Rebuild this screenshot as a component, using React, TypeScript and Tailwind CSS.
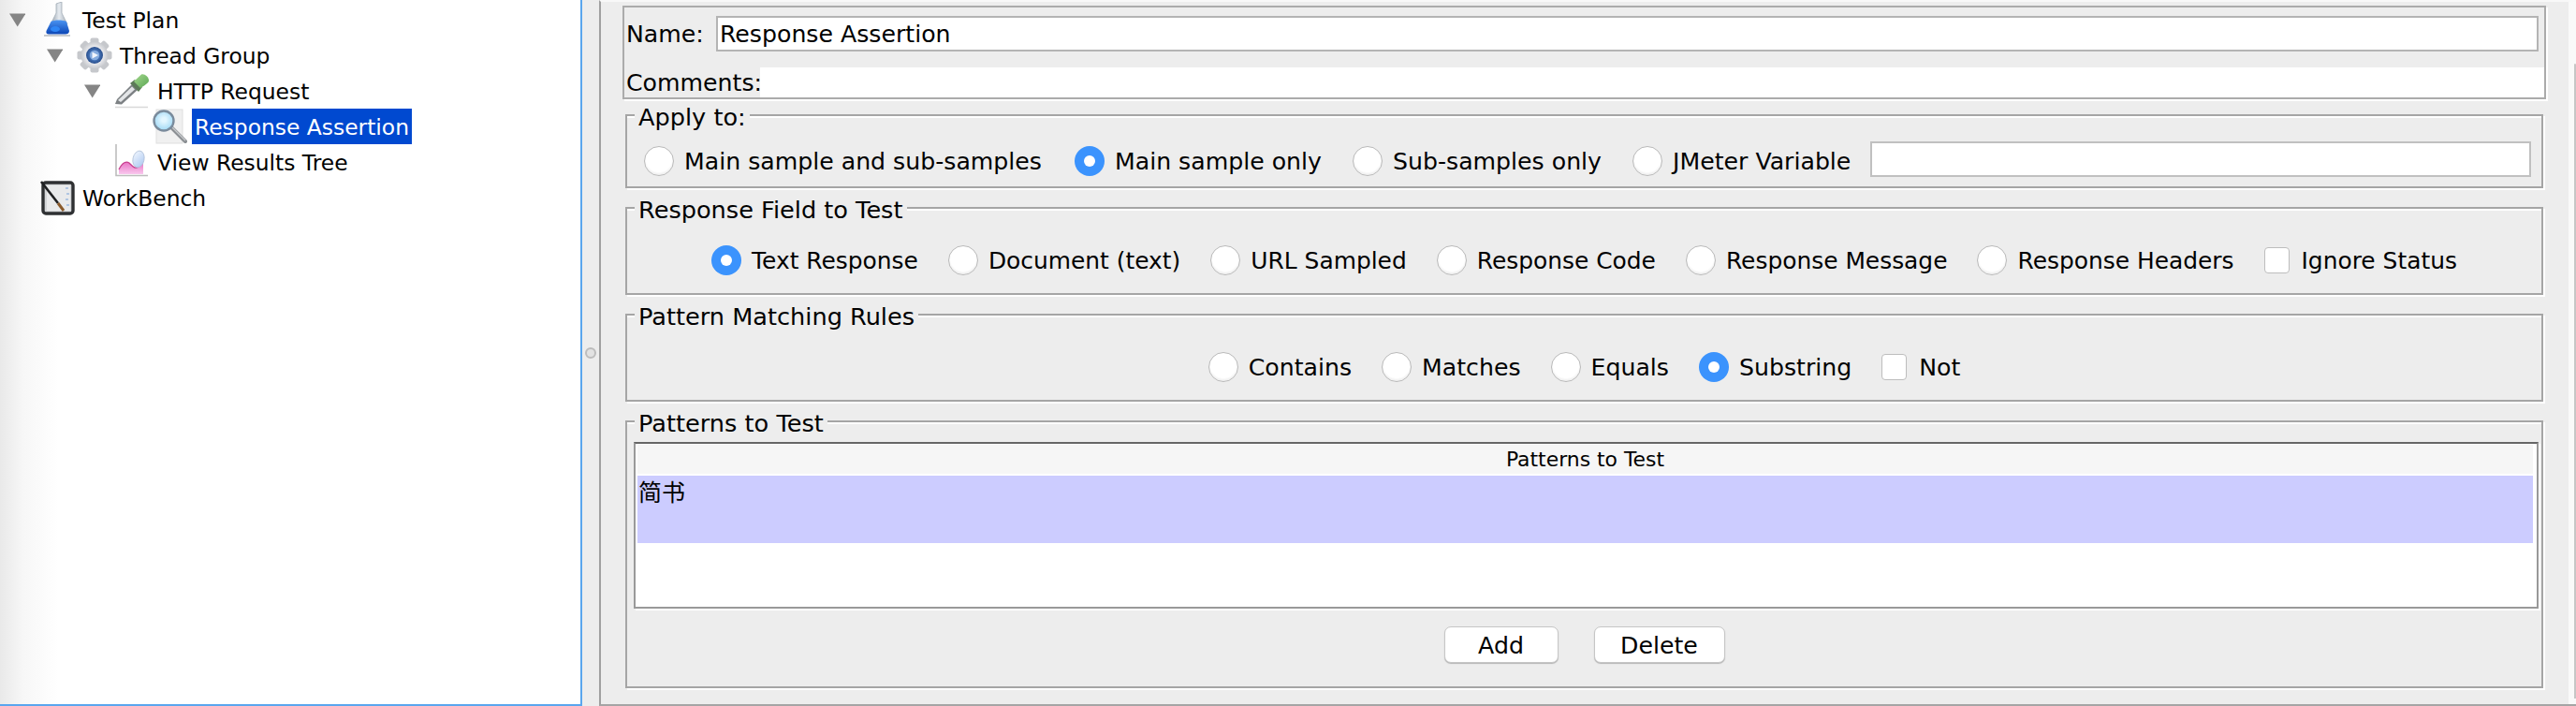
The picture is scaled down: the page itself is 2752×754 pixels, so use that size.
import React from "react";

function Triangle() {
  return (
    <svg width="17" height="15" viewBox="0 0 17 15" className="shrink-0">
      <path d="M0 0.5H17.5L8.7 14.5Z" fill="#858585" />
    </svg>
  );
}

function FlaskIcon() {
  return (
    <svg width="38" height="38" viewBox="0 0 38 38" className="blur-[0.4px]">
      <defs>
        <linearGradient id="liq" x1="0" y1="0" x2="0" y2="1">
          <stop offset="0" stopColor="#4a94f2" />
          <stop offset="1" stopColor="#0b45b5" />
        </linearGradient>
        <linearGradient id="glass" x1="0" y1="0" x2="1" y2="0">
          <stop offset="0" stopColor="#8f9ba8" />
          <stop offset="0.5" stopColor="#e6ebf0" />
          <stop offset="1" stopColor="#a3adb8" />
        </linearGradient>
      </defs>
      <path d="M18 2L24 0L24 12L30 24L12 24L18 12Z" fill="url(#glass)" stroke="#a4aeb8" strokeWidth="0.8" />
      <path d="M12.5 21C16 19 25 19 29 21L32 31C32 33.5 30 34.5 28 34.5H10C8 34.5 7 33.5 7.5 31Z" fill="url(#liq)" />
      <ellipse cx="17" cy="29" rx="5" ry="3" fill="#2e86f5" />
      <path d="M5 36H33" stroke="#8d959c" strokeWidth="1.6" opacity="0.6" />
    </svg>
  );
}

function GearIcon() {
  const teeth = Array.from({ length: 8 }, (_, i) => (i * 360) / 8);
  return (
    <svg width="38" height="38" viewBox="0 0 38 38" className="blur-[0.4px]">
      <defs>
        <radialGradient id="gearG" cx="0.5" cy="0.5" r="0.6">
          <stop offset="0.5" stopColor="#ececef" />
          <stop offset="1" stopColor="#b4b7bc" />
        </radialGradient>
        <radialGradient id="hub" cx="0.5" cy="0.5" r="0.5">
          <stop offset="0.2" stopColor="#5a90da" />
          <stop offset="1" stopColor="#2a4f8c" />
        </radialGradient>
      </defs>
      {teeth.map((a) => (
        <rect key={a} x="14.5" y="0.5" width="9" height="9" rx="2" fill="#c6c8cc" transform={`rotate(${a} 19 19)`} />
      ))}
      <circle cx="19" cy="19" r="14.5" fill="url(#gearG)" />
      <circle cx="19" cy="19" r="9" fill="url(#hub)" />
      <circle cx="19" cy="19" r="5.2" fill="#86acdf" />
      <path d="M16.5 15.5L23 19L16.5 22.5Z" fill="#f2f6fc" />
    </svg>
  );
}

function DropperIcon() {
  return (
    <svg width="38" height="38" viewBox="0 0 38 38" className="blur-[0.4px]">
      <defs>
        <linearGradient id="bulb" x1="0" y1="0" x2="1" y2="1">
          <stop offset="0" stopColor="#a6d98f" />
          <stop offset="1" stopColor="#5aa653" />
        </linearGradient>
      </defs>
      <path d="M1 36.5H36" stroke="#c9c9c9" strokeWidth="1.5" opacity="0.7" />
      <path d="M1 33L3 28L19 12L25 18L8 33.5Z" fill="#7d8184" />
      <path d="M4 29L19 14.5L22 17.5L7 31Z" fill="#e3e5e7" />
      <path d="M17 11L22 7L30 15L26 20Z" fill="#5c7a58" />
      <path d="M21 9L29 1.5C31.5 0 37 3.5 37 8C37 10 35 11.5 28 16Z" fill="url(#bulb)" />
    </svg>
  );
}

function MagnifierIcon() {
  return (
    <svg width="38" height="38" viewBox="0 0 38 38" className="blur-[0.4px]">
      <defs>
        <radialGradient id="lens" cx="0.5" cy="0.45" r="0.55">
          <stop offset="0.2" stopColor="#e3f6ff" />
          <stop offset="1" stopColor="#9fd8f5" />
        </radialGradient>
      </defs>
      <rect x="5" y="1" width="28" height="36" fill="#f0f0f0" stroke="#dfdfdf" />
      <path d="M21 20L36 35" stroke="#8b8f93" strokeWidth="4" strokeLinecap="round" />
      <path d="M22 20L36 34" stroke="#c8cbce" strokeWidth="1.2" />
      <circle cx="13" cy="13" r="10.5" fill="url(#lens)" stroke="#7a8b9c" strokeWidth="2.4" />
    </svg>
  );
}

function ChartIcon() {
  return (
    <svg width="38" height="38" viewBox="0 0 38 38" className="blur-[0.4px]">
      <defs>
        <linearGradient id="pink" x1="0" y1="0" x2="0" y2="1">
          <stop offset="0" stopColor="#e873c4" />
          <stop offset="1" stopColor="#f9c8ee" />
        </linearGradient>
        <linearGradient id="bl" x1="0" y1="0" x2="1" y2="1">
          <stop offset="0" stopColor="#f5f9ff" />
          <stop offset="1" stopColor="#a9c6f0" />
        </linearGradient>
      </defs>
      <path d="M2 0V33.5H36" fill="none" stroke="#bdbdbd" strokeWidth="1.6" />
      <path d="M5 32V27C9 19 13 18 16 20C19 23 22 27 26 24L31 20V32Z" fill="url(#pink)" />
      <path d="M5 27C9 19 13 18 16 20C19 23 22 27 26 24" fill="none" stroke="#c9408f" strokeWidth="1.3" />
      <ellipse cx="26" cy="16" rx="6" ry="9" fill="url(#bl)" stroke="#aebfd8" strokeWidth="0.8" transform="rotate(12 26 16)" />
    </svg>
  );
}

function NotebookIcon() {
  return (
    <svg width="38" height="38" viewBox="0 0 38 38" className="blur-[0.4px]">
      <rect x="4" y="3" width="32" height="33" rx="3" fill="#d4d6d8" stroke="#2e3032" strokeWidth="3.4" />
      <rect x="8" y="6" width="25" height="27" fill="#e9eaeb" />
      <path d="M28 9h3M29 15h3M28 21h3M29 27h3" stroke="#9dbbe0" strokeWidth="1.6" />
      <path d="M2 2L20 25" stroke="#1f2022" strokeWidth="2.6" />
      <path d="M20 25L26 33" stroke="#8a5a2b" strokeWidth="3" />
    </svg>
  );
}

function TreeRow({
  level,
  expander,
  icon,
  label,
  selected,
}: {
  level: number;
  expander?: boolean;
  icon: React.ReactNode;
  label: string;
  selected?: boolean;
}) {
  const pad = ["pl-[10px]", "pl-[50px]", "pl-[90px]", "pl-[130px]"][level];
  return (
    <div className={`flex h-[38px] items-center ${pad}`}>
      <div className="mr-[15px] flex w-[17px] shrink-0 justify-center">{expander ? <Triangle /> : null}</div>
      <div className="h-[38px] w-[38px] shrink-0">{icon}</div>
      <span
        className={`ml-[5px] h-[38px] px-[3px] text-[23.4px] leading-[40px] ${selected ? "bg-[#0049d0] text-white" : "text-black"}`}
      >
        {label}
      </span>
    </div>
  );
}

function Radio({ checked }: { checked?: boolean }) {
  if (checked) {
    return (
      <span className="flex h-[32px] w-[32px] shrink-0 items-center justify-center rounded-full bg-[#3b93fd]">
        <span className="h-[12px] w-[12px] rounded-full bg-white" />
      </span>
    );
  }
  return (
    <span className="h-[32px] w-[32px] shrink-0 rounded-full border border-[#b9b9b9] bg-white shadow-[inset_0_-2px_2px_#f0f0f0]" />
  );
}

function RadioItem({ label, checked, className }: { label: string; checked?: boolean; className?: string }) {
  return (
    <div className={`flex items-center gap-[11px] ${className ?? ""}`}>
      <Radio checked={checked} />
      <span className="whitespace-nowrap pt-[2px]">{label}</span>
    </div>
  );
}

function CheckItem({ label }: { label: string }) {
  return (
    <div className="flex items-center gap-[13px]">
      <span className="h-[28px] w-[27px] shrink-0 rounded-[4px] border border-[#bdbdbd] bg-white" />
      <span className="whitespace-nowrap pt-[2px]">{label}</span>
    </div>
  );
}

function Group({ title, className, children }: { title: string; className: string; children: React.ReactNode }) {
  return (
    <div
      className={`relative border-2 border-[#a5a5a5] shadow-[2px_2px_0_#ffffff,inset_0_2px_0_#ffffff] ${className}`}
    >
      <span className="absolute left-[8px] top-[-13px] bg-[#ededed] px-[4px] text-[25.6px] leading-[29px]">{title}</span>
      {children}
    </div>
  );
}

export default function App() {
  return (
    <div className="flex h-[754px] w-[2752px] overflow-hidden bg-[#ededed] font-['DejaVu_Sans',sans-serif] text-[25.2px] text-black">
      <aside className="h-[754px] w-[622px] shrink-0 border-b-2 border-r-2 border-[#5aa6ee] bg-linear-to-r from-[#e9e9e9] via-[#f7f7f7] via-[4%] to-white to-[10%] pt-[2px]">
        <TreeRow level={0} expander icon={<FlaskIcon />} label="Test Plan" />
        <TreeRow level={1} expander icon={<GearIcon />} label="Thread Group" />
        <TreeRow level={2} expander icon={<DropperIcon />} label="HTTP Request" />
        <TreeRow level={3} icon={<MagnifierIcon />} label="Response Assertion" selected />
        <TreeRow level={2} icon={<ChartIcon />} label="View Results Tree" />
        <TreeRow level={0} icon={<NotebookIcon />} label="WorkBench" />
      </aside>

      <div className="flex w-[18px] shrink-0 items-center justify-center">
        <span className="h-[12px] w-[12px] rounded-full border-2 border-[#bcbcbc] bg-[#e2e2e2]" />
      </div>

      <main className="flex h-[754px] flex-1 border-b-2 border-l-2 border-t-2 border-b-[#a5a5a5] border-l-[#a0a0a0] border-t-[#f8f8f8]">
        <div className="flex min-w-0 flex-1 flex-col pl-[26px] pr-[27px] pt-[4px]">
          <div className="-mx-[3px] h-[100px] border-2 border-[#ababab] shadow-[2px_2px_0_#ffffff]">
            <div className="mr-[6px] mt-[9px] flex h-[38px] items-center pl-[2px]">
              <span className="w-[96px] shrink-0 pt-[2px]">Name:</span>
              <div className="flex h-[38px] flex-1 items-center border-2 border-[#b4b4b4] bg-white pl-[2px] pt-[2px]">
                Response Assertion
              </div>
            </div>
            <div className="mt-[17px] flex h-[32px] items-center pl-[2px]">
              <span className="w-[143px] shrink-0 whitespace-nowrap pt-[2px]">Comments:</span>
              <div className="h-[32px] flex-1 bg-white" />
            </div>
          </div>

          <Group title="Apply to:" className="mt-[16px] h-[79px]">
            <div className="mt-[29px] flex h-[38px] items-center pl-[18px] pr-[11px]">
              <RadioItem label="Main sample and sub-samples" className="mr-[35px]" />
              <RadioItem label="Main sample only" checked className="mr-[33px]" />
              <RadioItem label="Sub-samples only" className="mr-[33px]" />
              <RadioItem label="JMeter Variable" className="mr-[21px]" />
              <div className="-mt-[4px] h-[38px] flex-1 border-2 border-[#c0c0c0] bg-white" />
            </div>
          </Group>

          <Group title="Response Field to Test" className="mt-[20px] h-[94px]">
            <div className="flex h-full items-center justify-center gap-[32px] pt-[20px] text-[24.9px]">
              <RadioItem label="Text Response" checked />
              <RadioItem label="Document (text)" />
              <RadioItem label="URL Sampled" />
              <RadioItem label="Response Code" />
              <RadioItem label="Response Message" />
              <RadioItem label="Response Headers" />
              <CheckItem label="Ignore Status" />
            </div>
          </Group>

          <Group title="Pattern Matching Rules" className="mt-[20px] h-[94px]">
            <div className="flex h-full items-center justify-center gap-[32px] pt-[20px]">
              <RadioItem label="Contains" />
              <RadioItem label="Matches" />
              <RadioItem label="Equals" />
              <RadioItem label="Substring" checked />
              <CheckItem label="Not" />
            </div>
          </Group>

          <Group title="Patterns to Test" className="mt-[20px] h-[286px]">
            <div className="ml-[7px] mr-[3px] mt-[21px] flex h-[178px] flex-col border-2 border-[#999999] border-t-[#666666] bg-white pl-[2px] pr-[4px] pt-[1px] shadow-[2px_2px_0_#ffffff]">
              <div className="flex h-[31px] shrink-0 items-center justify-center bg-[#f6f6f6] pt-[2px] text-[21.9px]">
                Patterns to Test
              </div>
              <div className="mt-[2px] h-[72px] shrink-0 bg-[#ccccff] pl-[1px] font-['Noto_Sans_CJK_SC',sans-serif] text-[25px] leading-[32px]">
                简书
              </div>
            </div>
            <div className="mt-[19px] flex justify-center gap-[38px]">
              <button className="h-[39px] w-[122px] rounded-[7px] border border-[#c6c6c6] bg-white pt-[1px] shadow-[0_1px_1px_#b5b5b5]">
                Add
              </button>
              <button className="h-[39px] w-[140px] rounded-[7px] border border-[#c6c6c6] bg-white pt-[1px] shadow-[0_1px_1px_#b5b5b5]">
                Delete
              </button>
            </div>
          </Group>
        </div>

        <div className="flex w-[8px] shrink-0 justify-end bg-[#f9f9f9] pb-[6px] pt-[66px]">
          <div className="w-[2px] rounded-t-[2px] bg-[#c6c6c6]" />
        </div>
      </main>
    </div>
  );
}
